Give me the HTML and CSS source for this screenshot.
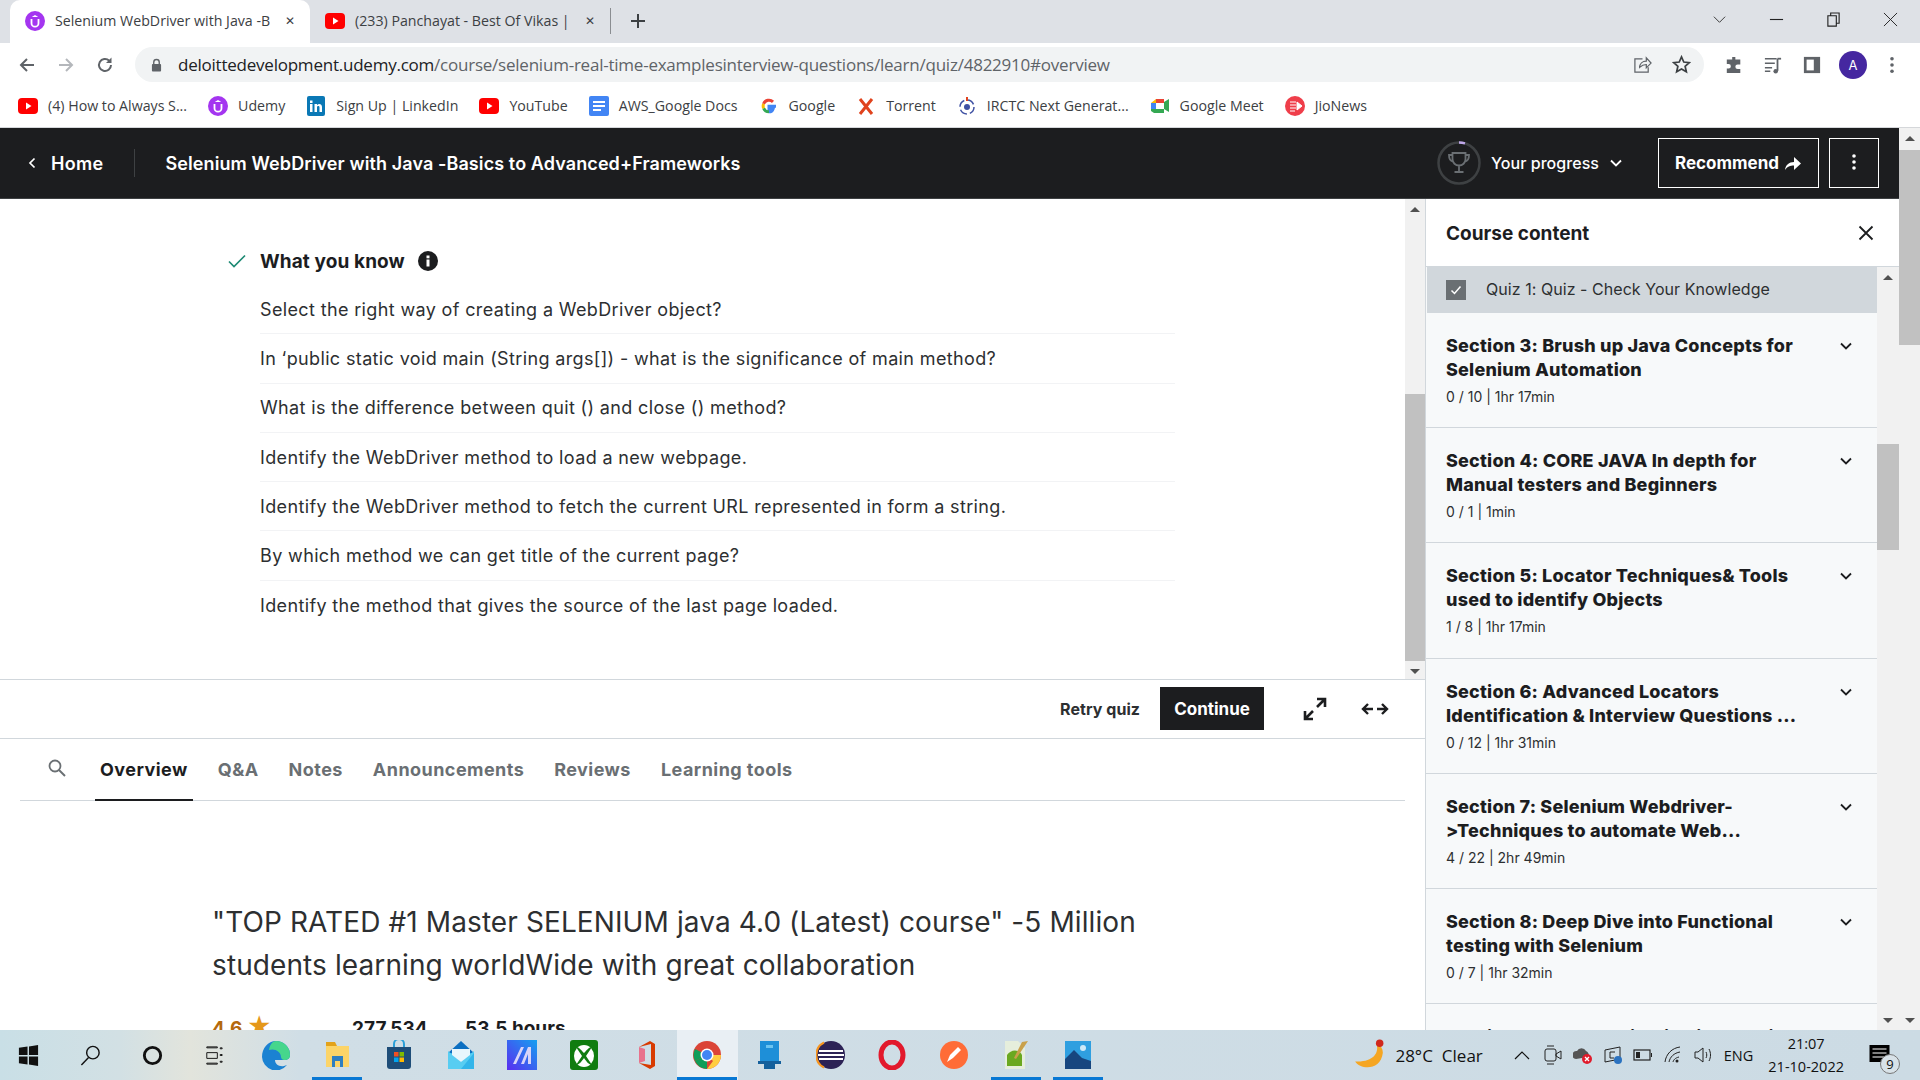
FILE: index.html
```html
<!DOCTYPE html>
<html lang="en">
<head>
    <meta charset="UTF-8">
    <title>Selenium WebDriver with Java - Udemy</title>
    <link rel="stylesheet" href="styles.css">
</head>
<body>
    <div class="tabstrip">
        <div class="tab active">
            <svg class="favicon" viewBox="0 0 20 20"><circle cx="10" cy="10" r="10" fill="#a435f0"/><path d="M6.500 8v4.200a3.500 3.500 0 0 0 7 0V8" fill="none" stroke="#fff" stroke-width="1.800"/><path d="M10 4l3.200 2H6.800z" fill="#fff"/></svg>
            <span class="tab-title">Selenium WebDriver with Java -B</span>
            <span class="tab-close">&#10005;</span>
        </div>
        <div class="tab">
            <svg class="favicon" viewBox="0 0 20 20"><rect y="2" width="20" height="16" rx="4" fill="#f00"/><path d="M8 6.500l5.500 3.500L8 13.500z" fill="#fff"/></svg>
            <span class="tab-title">(233) Panchayat - Best Of Vikas |</span>
            <span class="tab-close">&#10005;</span>
        </div>
        <span class="tab-sep"></span>
        <svg class="new-tab" viewBox="0 0 16 16"><path d="M8 1v14M1 8h14" stroke="#3c4043" stroke-width="2"/></svg>
        <div class="window-controls">
            <svg viewBox="0 0 16 16"><path d="M2 5l6 6 6-6" fill="none" stroke="#333" stroke-width="1"/></svg>
            <svg viewBox="0 0 16 16"><path d="M1 8h14" stroke="#222" stroke-width="1.200"/></svg>
            <svg viewBox="0 0 16 16"><path d="M2 4h9v11H2zM5 4V1h9v11h-3" fill="none" stroke="#222" stroke-width="1.200"/></svg>
            <svg viewBox="0 0 16 16"><path d="M1 1l14 14M15 1L1 15" stroke="#222" stroke-width="1"/></svg>
        </div>
    </div>

    <div class="toolbar">
        <svg class="nav-icon" viewBox="0 0 18 18"><path d="M16 9H3M9 3L3 9l6 6" fill="none" stroke="#5f6368" stroke-width="2"/></svg>
        <svg class="nav-icon" viewBox="0 0 18 18"><path d="M2 9h13M9 3l6 6-6 6" fill="none" stroke="#b4b7bb" stroke-width="2"/></svg>
        <svg class="nav-icon" viewBox="0 0 18 18"><path d="M15 9a6 6 0 1 1-1.800-4.300" fill="none" stroke="#5f6368" stroke-width="2"/><path d="M15.500 1.500v5.500H10z" fill="#5f6368"/></svg>
        <div class="omnibox">
            <svg class="lock" viewBox="0 0 12 14"><path d="M3 6V4a3 3 0 0 1 6 0v2" fill="none" stroke="#5f6368" stroke-width="1.500"/><rect x="1" y="6" width="10" height="8" rx="1" fill="#5f6368"/></svg>
            <span class="url"><b>deloittedevelopment.udemy.com</b>/course/selenium-real-time-examplesinterview-questions/learn/quiz/4822910#overview</span>
            <svg class="omni-icon" viewBox="0 0 20 20"><path d="M10 4H2v14h14v-5" fill="none" stroke="#5f6368" stroke-width="1.300"/><path d="M7 13c0-4 3-6.500 7-6.500V3l5 5.500-5 5V10c-3 0-5 1-7 3z" fill="none" stroke="#5f6368" stroke-width="1.300"/></svg>
            <svg class="omni-icon" viewBox="0 0 20 20"><path d="M10 2l2.400 5.400 5.800.6-4.400 3.900 1.300 5.800L10 14.700l-5.100 3 1.300-5.800L1.800 8l5.800-.6z" fill="none" stroke="#3c4043" stroke-width="1.800"/></svg>
        </div>
        <div class="toolbar-actions">
            <svg viewBox="0 0 20 20"><path d="M8 1h3.500v3H17v5.500h-3a2.500 2.500 0 0 0 0 5h3V19H2v-5h2a2.500 2.500 0 0 0 0-5H2V4h6z" fill="#5f6368"/></svg>
            <svg viewBox="0 0 20 20"><path d="M1 3h13M1 8h11M1 13h8M1 17h6" stroke="#5f6368" stroke-width="1.800"/><path d="M15 3v13.500" stroke="#5f6368" stroke-width="2"/><circle cx="13" cy="17" r="2.500" fill="#5f6368"/><path d="M15 3h4" stroke="#5f6368" stroke-width="2"/></svg>
            <svg viewBox="0 0 20 20"><rect x="1" y="1" width="18" height="18" fill="#5f6368"/><rect x="4" y="4" width="8" height="12" fill="#fff"/></svg>
            <span class="avatar">A</span>
            <svg viewBox="0 0 20 20"><circle cx="10" cy="3" r="2" fill="#5f6368"/><circle cx="10" cy="10" r="2" fill="#5f6368"/><circle cx="10" cy="17" r="2" fill="#5f6368"/></svg>
        </div>
    </div>

    <div class="bookmarks">
        <span class="bookmark"><svg viewBox="0 0 20 20"><rect y="2" width="20" height="16" rx="4" fill="#f00"/><path d="M8 6.500l5.500 3.500L8 13.500z" fill="#fff"/></svg>(4) How to Always S...</span>
        <span class="bookmark"><svg viewBox="0 0 20 20"><circle cx="10" cy="10" r="10" fill="#a435f0"/><path d="M6.500 8v4.200a3.500 3.500 0 0 0 7 0V8" fill="none" stroke="#fff" stroke-width="1.800"/><path d="M10 4l3.200 2H6.800z" fill="#fff"/></svg>Udemy</span>
        <span class="bookmark"><svg viewBox="0 0 20 20"><rect x="1" width="18" height="20" rx="2" fill="#0a78b5"/><path d="M4 8h2.500v8H4zM4 4.500h2.500V7H4zM8.500 8H11v1.200c1.500-2 5-1.500 5 1.800v5h-2.500v-4.500c0-2-2.500-1.800-2.500 0V16H8.500z" fill="#fff"/></svg>Sign Up | LinkedIn</span>
        <span class="bookmark"><svg viewBox="0 0 20 20"><rect y="2" width="20" height="16" rx="4" fill="#f00"/><path d="M8 6.500l5.500 3.500L8 13.500z" fill="#fff"/></svg>YouTube</span>
        <span class="bookmark"><svg viewBox="0 0 20 20"><rect width="20" height="20" rx="2" fill="#4285f4"/><path d="M4 6h12M4 10h12M4 14h8" stroke="#fff" stroke-width="2"/></svg>AWS_Google Docs</span>
        <span class="bookmark"><svg viewBox="0 0 20 20"><path d="M17 10.200H10v3h4c-.5 1.600-2 2.600-4 2.600" fill="none" stroke="#4285f4" stroke-width="3"/><path d="M10 15.800a5.800 5.800 0 0 1-5.400-3.600" fill="none" stroke="#34a853" stroke-width="3"/><path d="M4.600 12.200a5.800 5.800 0 0 1 0-4.400" fill="none" stroke="#fbbc05" stroke-width="3"/><path d="M4.600 7.800A5.800 5.800 0 0 1 14 5.800" fill="none" stroke="#ea4335" stroke-width="3"/></svg>Google</span>
        <span class="bookmark"><svg viewBox="0 0 20 20"><path d="M4 3l12 15M16 3L4 18" stroke="#e0431d" stroke-width="3"/></svg>Torrent</span>
        <span class="bookmark"><svg viewBox="0 0 20 20"><circle cx="10" cy="11" r="7" fill="none" stroke="#3f51a3" stroke-width="1.500" stroke-dasharray="8 3"/><circle cx="10" cy="11" r="3" fill="#3f51a3"/><path d="M10 1v4" stroke="#e0431d" stroke-width="2"/></svg>IRCTC Next Generat...</span>
        <span class="bookmark"><svg viewBox="0 0 20 20"><path d="M1 7l5-4h8v6H1z" fill="#fbbc05"/><path d="M1 7h5v6H1z" fill="#4285f4"/><path d="M6 13h8v4H4l-3-2v-2z" fill="#34a853"/><path d="M6 3h8v5H6z" fill="#ea4335"/><path d="M14 6l5-3v13l-5-3z" fill="#34a853"/><rect x="6" y="7" width="8" height="6" fill="#fff"/></svg>Google Meet</span>
        <span class="bookmark"><svg viewBox="0 0 20 20"><circle cx="10" cy="10" r="10" fill="#ef3e4a"/><path d="M5 6h6M5 9h6M5 12h6M5 15h5M12 6l5 4-5 4z" stroke="#fff" fill="#fff"/></svg>JioNews</span>
    </div>

    <div class="page">
        <div class="page-content">
            <header class="course-header">
                <svg class="back-chevron" viewBox="0 0 10 14"><path d="M7.500 2.500L3 7l4.500 4.500" fill="none" stroke="#fff" stroke-width="1.700"/></svg>
                <span class="home-link">Home</span>
                <span class="header-divider"></span>
                <span class="course-title">Selenium WebDriver with Java -Basics to Advanced+Frameworks</span>
                <svg class="trophy" viewBox="0 0 44 44">
                    <circle cx="22" cy="22" r="20.500" fill="none" stroke="#3e4143" stroke-width="2.500"/>
                    <path d="M22 1.500a20.500 20.500 0 0 1 6 .9" fill="none" stroke="#c0a8ea" stroke-width="2.500"/>
                    <path d="M15.500 12h13v6c0 4-3 6.500-6.500 6.500s-6.500-2.500-6.500-6.500zM15.500 14H12c0 4 1.500 6 4 6.500M28.500 14H32c0 4-1.500 6-4 6.500M22 24.500V30M17.500 31h9" fill="none" stroke="#6a6f73" stroke-width="1.800"/>
                </svg>
                <span class="progress-link">Your progress</span>
                <svg class="progress-chevron" viewBox="0 0 14 14"><path d="M2 4.500l5 5 5-5" fill="none" stroke="#fff" stroke-width="1.800"/></svg>
                <button class="recommend-btn">Recommend
                    <svg viewBox="0 0 18 16"><path d="M1 15c.5-5 4-8 9-8V2l7 6.500-7 6.500v-4.500c-4 0-6.500 1-9 4.500z" fill="#fff"/></svg>
                </button>
                <button class="kebab-btn">
                    <svg viewBox="0 0 6 18"><circle cx="3" cy="3" r="1.800" fill="#fff"/><circle cx="3" cy="9" r="1.800" fill="#fff"/><circle cx="3" cy="15" r="1.800" fill="#fff"/></svg>
                </button>
            </header>

            <div class="workspace">
                <main class="main">
                    <div class="quiz-view">
                        <div class="quiz-body">
                            <div class="quiz-heading">
                                <svg class="check" viewBox="0 0 18 14"><path d="M1 7.500l5 5L17 1.500" fill="none" stroke="#1e8a74" stroke-width="1.700"/></svg>
                                <h3>What you know</h3>
                                <svg class="info" viewBox="0 0 20 20"><circle cx="10" cy="10" r="10" fill="#1c1d1f"/><rect x="8.500" y="8.500" width="3" height="7" fill="#fff"/><rect x="8.500" y="4.500" width="3" height="2.800" fill="#fff"/></svg>
                            </div>
                            <ul class="question-list">
                                <li>Select the right way of creating a WebDriver object?</li>
                                <li>In ‘public static void main (String args[]) - what is the significance of main method?</li>
                                <li>What is the difference between quit () and close () method?</li>
                                <li>Identify the WebDriver method to load a new webpage.</li>
                                <li>Identify the WebDriver method to fetch the current URL represented in form a string.</li>
                                <li>By which method we can get title of the current page?</li>
                                <li>Identify the method that gives the source of the last page loaded.</li>
                            </ul>
                        </div>
                        <div class="scrollbar quiz-scroll">
                            <span class="arrow-up"></span>
                            <div class="track"><span class="thumb"></span></div>
                            <span class="arrow-down"></span>
                        </div>
                    </div>

                    <div class="quiz-footer">
                        <span class="retry">Retry quiz</span>
                        <button class="continue-btn">Continue</button>
                        <svg class="expand" viewBox="0 0 24 24"><path d="M14 2h8v8M21.500 2.500L14 10M10 22H2v-8M2.500 21.500L10 14" fill="none" stroke="#1c1d1f" stroke-width="2.600"/></svg>
                        <svg class="widen" viewBox="0 0 28 14"><path d="M12 7H2M7 2L2 7l5 5M16 7h10M21 2l5 5-5 5" fill="none" stroke="#1c1d1f" stroke-width="2.400"/></svg>
                    </div>

                    <nav class="course-tabs">
                        <svg class="tab-search" viewBox="0 0 20 20"><circle cx="8" cy="8" r="5.500" fill="none" stroke="#6a6f73" stroke-width="1.800"/><path d="M12 12l6 6" stroke="#6a6f73" stroke-width="2"/></svg>
                        <span class="course-tab current">Overview</span>
                        <span class="course-tab">Q&amp;A</span>
                        <span class="course-tab">Notes</span>
                        <span class="course-tab">Announcements</span>
                        <span class="course-tab">Reviews</span>
                        <span class="course-tab">Learning tools</span>
                    </nav>

                    <section class="overview">
                        <h2>"TOP RATED #1 Master SELENIUM java 4.0 (Latest) course" -5 Million students learning worldWide with great collaboration</h2>
                        <div class="stats">
                            <span class="rating">4.6 <i>★</i></span>
                            <span class="stat-students">277,534</span>
                            <span>53.5 hours</span>
                        </div>
                    </section>
                </main>

                <aside class="sidebar">
                    <div class="sidebar-head">
                        <h3>Course content</h3>
                        <svg viewBox="0 0 16 16"><path d="M1.500 1.500l13 13M14.500 1.500l-13 13" stroke="#1c1d1f" stroke-width="1.800"/></svg>
                    </div>
                    <div class="sidebar-list">
                        <div class="sections">
                            <div class="quiz-row">
                                <span class="checkbox"><svg viewBox="0 0 20 20"><path d="M5.500 10.500l3 3 6-7" fill="none" stroke="#fff" stroke-width="1.500"/></svg></span>
                                <span>Quiz 1: Quiz - Check Your Knowledge</span>
                            </div>
                            <div class="section">
                                <div class="section-text">
                                    <h4>Section 3: Brush up Java Concepts for Selenium Automation</h4>
                                    <p>0 / 10 | 1hr 17min</p>
                                </div>
                                <svg viewBox="0 0 14 14"><path d="M2 4.500l5 5 5-5" fill="none" stroke="#1c1d1f" stroke-width="1.800"/></svg>
                            </div>
                            <div class="section">
                                <div class="section-text">
                                    <h4>Section 4: CORE JAVA In depth for Manual testers and Beginners</h4>
                                    <p>0 / 1 | 1min</p>
                                </div>
                                <svg viewBox="0 0 14 14"><path d="M2 4.500l5 5 5-5" fill="none" stroke="#1c1d1f" stroke-width="1.800"/></svg>
                            </div>
                            <div class="section">
                                <div class="section-text">
                                    <h4>Section 5: Locator Techniques&amp; Tools used to identify Objects</h4>
                                    <p>1 / 8 | 1hr 17min</p>
                                </div>
                                <svg viewBox="0 0 14 14"><path d="M2 4.500l5 5 5-5" fill="none" stroke="#1c1d1f" stroke-width="1.800"/></svg>
                            </div>
                            <div class="section">
                                <div class="section-text">
                                    <h4>Section 6: Advanced Locators Identification &amp; Interview Questions ...</h4>
                                    <p>0 / 12 | 1hr 31min</p>
                                </div>
                                <svg viewBox="0 0 14 14"><path d="M2 4.500l5 5 5-5" fill="none" stroke="#1c1d1f" stroke-width="1.800"/></svg>
                            </div>
                            <div class="section">
                                <div class="section-text">
                                    <h4>Section 7: Selenium Webdriver- &gt;Techniques to automate Web...</h4>
                                    <p>4 / 22 | 2hr 49min</p>
                                </div>
                                <svg viewBox="0 0 14 14"><path d="M2 4.500l5 5 5-5" fill="none" stroke="#1c1d1f" stroke-width="1.800"/></svg>
                            </div>
                            <div class="section">
                                <div class="section-text">
                                    <h4>Section 8: Deep Dive into Functional testing with Selenium</h4>
                                    <p>0 / 7 | 1hr 32min</p>
                                </div>
                                <svg viewBox="0 0 14 14"><path d="M2 4.500l5 5 5-5" fill="none" stroke="#1c1d1f" stroke-width="1.800"/></svg>
                            </div>
                            <div class="section">
                                <div class="section-text">
                                    <h4>Section 9: Synchronization in Selenium</h4>
                                </div>
                            </div>
                        </div>
                        <div class="scrollbar list-scroll">
                            <span class="arrow-up"></span>
                            <div class="track"><span class="thumb"></span></div>
                            <span class="arrow-down"></span>
                        </div>
                    </div>
                </aside>
            </div>
        </div>

        <div class="scrollbar page-scroll">
            <span class="arrow-up"></span>
            <div class="track"><span class="thumb"></span></div>
            <span class="arrow-down"></span>
        </div>
    </div>

    <footer class="taskbar">
        <div class="task-items">
            <span class="task-item sys"><svg viewBox="0 0 24 24"><path d="M2 4l9-1.300V11.500H2zM12.500 2.500L22 1v10.500h-9.500zM2 13h9v8.300L2 20zM12.500 13H22v10l-9.500-1.500z" fill="#111"/></svg></span>
            <span class="task-item sys"><svg viewBox="0 0 24 24"><circle cx="14.500" cy="9" r="6.500" fill="none" stroke="#111" stroke-width="1.500"/><path d="M10 14l-7.500 8" stroke="#111" stroke-width="1.500"/></svg></span>
            <span class="task-item sys"><svg viewBox="0 0 24 24"><circle cx="12" cy="12" r="8.500" fill="none" stroke="#111" stroke-width="3"/></svg></span>
            <span class="task-item sys"><svg viewBox="0 0 24 24"><path d="M5 3h11v1H5zM5 9h11v6H5zM5 20h11v1H5zM19 4h2v1h-2zM19 11h2v1h-2zM19 18h2v1h-2z" fill="none" stroke="#111"/></svg></span>
            <span class="task-item"><svg viewBox="0 0 30 30"><path d="M15 1a14 14 0 0 1 14 14c0 3-2 5-6 5H14c0 4 4 7 9 6l3-1a14 14 0 0 1-25-8C1 8 7 1 15 1z" fill="#1b82d2"/><path d="M15 1a14 14 0 0 1 14 14c0 3-2 5-6 5-1 0-3-1-3-3 0-5-6-9-12-7C9 4 12 1 15 1z" fill="#46d68c"/></svg></span>
            <span class="task-item running"><svg viewBox="0 0 30 30"><path d="M4 2h9l2 4H4z" fill="#e3a21a"/><rect x="4" y="6" width="23" height="21" fill="#fcd468"/><path d="M10 27V16h11v11h-3v-6h-5v6z" fill="#2f7fc1"/></svg></span>
            <span class="task-item"><svg viewBox="0 0 30 30"><path d="M10 7V4a5 5 0 0 1 10 0v3" fill="none" stroke="#2a9fd8" stroke-width="2"/><path d="M3 7h24v19a3 3 0 0 1-3 3H6a3 3 0 0 1-3-3z" fill="#1e4d78"/><path d="M10 12h4.500v4.500H10z" fill="#f25022"/><path d="M15.500 12H20v4.500h-4.500z" fill="#7fba00"/><path d="M10 17.500h4.500V22H10z" fill="#00a4ef"/><path d="M15.500 17.500H20V22h-4.500z" fill="#ffb900"/></svg></span>
            <span class="task-item"><svg viewBox="0 0 30 30"><path d="M15 1l13 12H2z" fill="#0c6fc1"/><rect x="2" y="13" width="26" height="16" fill="#33b5ea"/><path d="M2 11l13 11 13-11v2L15 29H2z" fill="#58cdf2"/><path d="M6 9h18v6l-9 7-9-7z" fill="#e8f6fc"/></svg></span>
            <span class="task-item"><svg viewBox="0 0 30 30"><defs><linearGradient id="appGrad" x1="0" y1="1" x2="1" y2="0"><stop offset="0" stop-color="#5a2df0"/><stop offset="1" stop-color="#14a0f0"/></linearGradient></defs><rect width="30" height="30" fill="url(#appGrad)"/><path d="M6 24L14 7h3L9 24zM14 24l7-17h3v17h-3V14l-4 10z" fill="#d8d4f8"/></svg></span>
            <span class="task-item"><svg viewBox="0 0 30 30"><rect x="1" width="28" height="30" rx="3" fill="#107c10"/><ellipse cx="15" cy="16" rx="10" ry="11" fill="#fff"/><path d="M15 13c-3-3-5-6-8-6l6 9-6 9c3 0 6-4 8-7 2 3 5 7 8 7l-6-9 6-9c-3 0-5 3-8 6z" fill="#107c10"/></svg></span>
            <span class="task-item"><svg viewBox="0 0 30 30"><path d="M8 7l11-6 5 3v22l-5 3-11-6 12 2V4z" fill="#d83b01"/><path d="M8 7v16l6-2V9z" fill="#e8728c"/></svg></span>
            <span class="task-item running current"><svg viewBox="0 0 30 30"><circle cx="15" cy="15" r="14" fill="#db4437"/><path d="M15 15L3 21a14 14 0 0 0 12 8z" fill="#0f9d58"/><path d="M15 15l-12 6a14 14 0 0 1 0-12z" fill="#0f9d58"/><path d="M15 15h14a14 14 0 0 1-14 14l6-8z" fill="#ffcd40"/><circle cx="15" cy="15" r="6.500" fill="#fff"/><circle cx="15" cy="15" r="5" fill="#4285f4"/></svg></span>
            <span class="task-item"><svg viewBox="0 0 30 30"><rect x="6" y="1" width="19" height="22" fill="#1e8fd8"/><path d="M4 21h23v3H4z" fill="#14609c"/><rect x="10" y="24" width="11" height="5" fill="#14609c"/><path d="M12 5h7v3h-7z" fill="#6cc4f0"/></svg></span>
            <span class="task-item"><svg viewBox="0 0 30 30"><circle cx="15" cy="15" r="14" fill="#2c2255"/><path d="M3 11h24M2 15h26M3 19h24" stroke="#fff" stroke-width="2"/><path d="M8 2.500A14 14 0 0 0 8 27.500" fill="none" stroke="#f7941e" stroke-width="2"/></svg></span>
            <span class="task-item"><svg viewBox="0 0 30 30"><ellipse cx="15" cy="15" rx="11" ry="13" fill="none" stroke="#e2192c" stroke-width="5"/></svg></span>
            <span class="task-item"><svg viewBox="0 0 30 30"><circle cx="15" cy="15" r="14" fill="#ff6c37"/><path d="M8 22l3-7 8-8 3 3-8 8z" fill="#fff"/></svg></span>
            <span class="task-item running"><svg viewBox="0 0 30 30"><path d="M4 1h13l7 7v21H4z" fill="#e6eedc"/><path d="M6 15c4-6 12-6 15 0v11H6z" fill="#6aa820"/><path d="M21 2l6-1-12 18-2-1z" fill="#c9a04a"/></svg></span>
            <span class="task-item running"><svg viewBox="0 0 30 30"><rect x="2" y="1" width="26" height="28" fill="#2f9fe0"/><path d="M2 29V19l9-9 8 8 9 3v8z" fill="#17467f"/><circle cx="20" cy="8" r="3" fill="#cde9f8"/></svg></span>
        </div>
        <div class="tray">
            <svg class="moon" viewBox="0 0 30 30"><path d="M22 4c3 10-4 18-20 17 5 8 24 9 26-8 0-4-2-7-6-9z" fill="#f5a623"/><circle cx="25" cy="4" r="3.500" fill="#d0281c"/></svg>
            <span class="weather">28°C</span>
            <span class="weather">Clear</span>
            <svg class="tray-chevron" viewBox="0 0 16 16"><path d="M1 12l7-7 7 7" fill="none" stroke="#111" stroke-width="1.200"/></svg>
            <svg class="tray-icon" viewBox="0 0 20 20"><rect x="2" y="4" width="11" height="12" rx="2" fill="none" stroke="#222"/><path d="M13 9l5-3v8l-5-3z" fill="none" stroke="#222"/><path d="M4 1h7M4 19h7" stroke="#222"/></svg>
            <svg class="tray-icon" viewBox="0 0 20 20"><path d="M3 14a4 4 0 0 1 1-8 5 5 0 0 1 9 0 4 4 0 0 1 2 6z" fill="#555"/><circle cx="14" cy="14" r="5" fill="#e01b2b"/><path d="M12 12l4 4M16 12l-4 4" stroke="#fff" stroke-width="1.300"/></svg>
            <svg class="tray-icon" viewBox="0 0 20 20"><path d="M2 5l15-3v12l-15 3z" fill="none" stroke="#222"/><path d="M12 7H7v6h4" fill="none" stroke="#222"/><circle cx="15" cy="15" r="4" fill="#2a72c0"/></svg>
            <svg class="tray-icon" viewBox="0 0 20 20"><rect x="1" y="5" width="16" height="10" fill="none" stroke="#222" stroke-width="1.200"/><rect x="3" y="7" width="4" height="6" fill="#222"/><path d="M18.500 8v4" stroke="#222"/></svg>
            <svg class="tray-icon" viewBox="0 0 20 20"><path d="M2 17C3 9 9 3 17 2M6 17c1-5 5-9 11-10M10 17c.5-2 2-4 6-5" fill="none" stroke="#222"/><circle cx="14" cy="16" r="1.500" fill="#222"/></svg>
            <svg class="tray-icon" viewBox="0 0 20 20"><path d="M2 7h3l5-4v14l-5-4H2z" fill="none" stroke="#222"/><path d="M13 7c1 2 1 4 0 6M16 4c2 4 2 8 0 12" fill="none" stroke="#222"/></svg>
            <span class="lang">ENG</span>
            <span class="clock"><span>21:07</span><span>21-10-2022</span></span>
            <span class="notify">
                <svg viewBox="0 0 20 20"><rect width="20" height="17" fill="#000"/><path d="M3 4h14M3 8h14M3 12h14" stroke="#fff"/></svg>
                <span class="notify-count">9</span>
            </span>
        </div>
    </footer>
</body>
</html>
```

FILE: styles.css
```css
* {
    box-sizing: border-box;
}

body {
    margin: 0;
    width: 1920px;
    height: 1080px;
    overflow: hidden;
    display: flex;
    flex-direction: column;
    font-family: "Inter", "Liberation Sans", sans-serif;
    color: #1c1d1f;
    background-color: white;
}

button {
    font-family: inherit;
    cursor: pointer;
}

/* browser chrome */
.tabstrip {
    height: 43px;
    flex: none;
    display: flex;
    align-items: center;
    padding-left: 10px;
    background-color: #dee1e6;
    font-family: "Open Sans", sans-serif;
    font-size: 14.200px;
    color: #3c4043;
}

.tab {
    width: 300px;
    height: 43px;
    display: flex;
    align-items: center;
    padding: 0 15px 2px;
    gap: 10px;
    border-radius: 10px 10px 0 0;
}

.tab.active {
    background-color: white;
}

.favicon {
    width: 20px;
    height: 20px;
    flex: none;
}

.tab-title {
    flex: 1;
    overflow: hidden;
    white-space: nowrap;
}

.tab-close {
    font-size: 12px;
    color: #3c4043;
}

.tab-sep {
    width: 1px;
    height: 26px;
    margin-bottom: 2px;
    background-color: #8a8d91;
}

.new-tab {
    width: 16px;
    height: 16px;
    margin: 0 0 2px 19px;
}

.window-controls {
    margin: 0 0 5px auto;
    display: flex;
    gap: 42px;
    padding-right: 22px;
}

.window-controls svg {
    width: 15px;
    height: 15px;
}

.toolbar {
    height: 43px;
    flex: none;
    display: flex;
    align-items: center;
    padding-left: 18px;
    gap: 21px;
    background-color: white;
}

.nav-icon {
    width: 18px;
    height: 18px;
}

.omnibox {
    width: 1569px;
    height: 35px;
    display: flex;
    align-items: center;
    padding: 0 13px 0 16px;
    gap: 16px;
    border-radius: 18px;
    background-color: #f1f3f4;
    font-family: "Open Sans", sans-serif;
    font-size: 17px;
    color: #5f6368;
}

.lock {
    width: 11px;
    height: 14px;
    flex: none;
}

.url {
    flex: 1;
    white-space: nowrap;
    letter-spacing: -0.23px;
}

.url b {
    font-weight: 400;
    color: #202124;
}

.omni-icon {
    width: 19px;
    height: 19px;
    margin-left: 4px;
}

.toolbar-actions {
    display: flex;
    align-items: center;
    gap: 21px;
}

.toolbar-actions svg {
    width: 18px;
    height: 18px;
}

.avatar {
    width: 28px;
    height: 28px;
    margin: 0 -5px 0 -3px;
    border-radius: 50%;
    display: flex;
    align-items: center;
    justify-content: center;
    background-color: #4527a0;
    color: white;
    font-size: 13px;
}

.bookmarks {
    height: 42px;
    flex: none;
    display: flex;
    align-items: center;
    padding: 0 0 2px 18px;
    gap: 21px;
    background-color: white;
    border-bottom: 1px solid #d5d7da;
    font-family: "Open Sans", sans-serif;
    font-size: 14.200px;
    color: #3c4043;
}

.bookmark {
    display: flex;
    align-items: center;
    gap: 10px;
    white-space: nowrap;
}

.bookmark svg {
    width: 20px;
    height: 20px;
}

.page {
    flex: 1;
    min-height: 0;
    display: flex;
}

.page-content {
    width: 1899px;
    flex: none;
    display: flex;
    flex-direction: column;
}

/* udemy course header */
.course-header {
    height: 71px;
    flex: none;
    display: flex;
    align-items: center;
    padding-right: 20px;
    background-color: #1c1d1f;
    border-bottom: 1px solid #3e4143;
    color: white;
    font-weight: 700;
    font-size: 18px;
}

.back-chevron {
    width: 10px;
    height: 14px;
    margin-left: 27px;
}

.home-link {
    margin-left: 14px;
    font-weight: 600;
    letter-spacing: 0.3px;
}

.header-divider {
    width: 1px;
    height: 28px;
    margin: 0 30px 0 31px;
    background-color: #3e4143;
}

.course-title {
    font-weight: 600;
    letter-spacing: 0.1px;
}

.trophy {
    width: 44px;
    height: 44px;
    margin-left: auto;
}

.progress-link {
    margin-left: 10px;
    font-size: 16px;
    font-weight: 500;
    letter-spacing: 0.05px;
}

.progress-chevron {
    width: 14px;
    height: 14px;
    margin-left: 10px;
}

.recommend-btn {
    width: 161px;
    height: 50px;
    margin-left: 35px;
    display: flex;
    align-items: center;
    justify-content: center;
    gap: 5px;
    background-color: #1c1d1f;
    border: 1px solid white;
    color: white;
    font-size: 17px;
    font-weight: 700;
}

.recommend-btn svg {
    width: 18px;
    height: 16px;
}

.kebab-btn {
    width: 50px;
    height: 50px;
    margin-left: 10px;
    background-color: #1c1d1f;
    border: 1px solid white;
}

.kebab-btn svg {
    width: 6px;
    height: 18px;
}

.workspace {
    flex: 1;
    min-height: 0;
    display: flex;
}

.main {
    width: 1425px;
    flex: none;
    overflow: hidden;
}

/* quiz result */
.quiz-view {
    height: 481px;
    display: flex;
    border-bottom: 1px solid #d1d7dc;
}

.quiz-body {
    flex: 1;
    padding: 48px 230px 0 228px;
}

.quiz-heading {
    height: 28px;
    display: flex;
    align-items: center;
}

.check {
    width: 18px;
    height: 14px;
}

.quiz-heading h3 {
    margin: 0 13px 0 14px;
    font-size: 19px;
    font-weight: 700;
    letter-spacing: 0.1px;
}

.info {
    width: 20px;
    height: 20px;
}

.question-list {
    list-style: none;
    margin: 10px 0 0 32px;
    padding: 0;
    font-size: 18px;
    letter-spacing: 0.36px;
    color: #2d2f31;
}

.question-list li {
    height: 49.300px;
    display: flex;
    align-items: center;
    border-bottom: 1px solid #f2f3f5;
}

.question-list li:last-child {
    border-bottom: none;
}

.scrollbar {
    width: 20px;
    flex: none;
    display: flex;
    flex-direction: column;
    align-items: center;
    background-color: #f1f1f1;
}

.arrow-up,
.arrow-down {
    width: 100%;
    height: 20px;
    flex: none;
    display: flex;
    align-items: center;
    justify-content: center;
}

.arrow-up::before {
    content: "";
    border: 5px solid transparent;
    border-top: none;
    border-bottom: 5px solid #505050;
}

.arrow-down::before {
    content: "";
    border: 5px solid transparent;
    border-bottom: none;
    border-top: 5px solid #505050;
}

.track {
    flex: 1;
    width: 100%;
}

.thumb {
    display: block;
    width: 100%;
    background-color: #c1c1c1;
}

.quiz-scroll .track {
    padding-top: 175px;
}

.quiz-scroll .thumb {
    height: 267px;
}

.quiz-footer {
    height: 59px;
    display: flex;
    align-items: center;
    justify-content: flex-end;
    padding: 0 36px 1px 0;
    border-bottom: 1px solid #d1d7dc;
}

.retry {
    font-size: 16px;
    font-weight: 700;
    letter-spacing: 0.05px;
    color: #2d2f31;
}

.continue-btn {
    width: 104px;
    height: 43px;
    margin-left: 20px;
    background-color: #1c1d1f;
    border: none;
    color: white;
    font-size: 17px;
    font-weight: 700;
}

.expand {
    width: 24px;
    height: 24px;
    margin-left: 39px;
}

.widen {
    width: 28px;
    height: 14px;
    margin-left: 34px;
}

/* tabs under the quiz */
.course-tabs {
    height: 62px;
    margin: 0 20px 0 20px;
    display: flex;
    align-items: stretch;
    border-bottom: 1px solid #d1d7dc;
    font-size: 18px;
    font-weight: 700;
    letter-spacing: 0.45px;
    color: #6a6f73;
}

.tab-search {
    width: 20px;
    height: 20px;
    margin: 19px 28px 0 27px;
}

.course-tab {
    display: flex;
    align-items: center;
    padding: 0 5px;
    margin-right: 20px;
    margin-bottom: -1px;
    border-bottom: 2px solid transparent;
}

.course-tab.current {
    color: #1c1d1f;
    border-bottom-color: #1c1d1f;
}

.overview {
    padding: 100px 250px 0 212px;
}

.overview h2 {
    margin: 0;
    font-size: 28px;
    font-weight: 400;
    line-height: 43px;
    letter-spacing: 0.1px;
    color: #2d2f31;
}

.stats {
    display: flex;
    margin-top: 30px;
    font-size: 19px;
    font-weight: 700;
}

.rating {
    width: 140px;
    color: #b4690e;
}

.rating i {
    font-style: normal;
    font-size: 24px;
    line-height: 20px;
    color: #e59819;
}

.stat-students {
    width: 113px;
}

/* course content panel */
.sidebar {
    width: 474px;
    flex: none;
    display: flex;
    flex-direction: column;
    border-left: 1px solid #d1d7dc;
}

.sidebar-head {
    height: 68px;
    flex: none;
    display: flex;
    align-items: center;
    justify-content: space-between;
    padding: 1px 25px 0 20px;
    background-color: white;
    border-bottom: 1px solid #d1d7dc;
}

.sidebar-head h3 {
    margin: 0;
    font-size: 19px;
    font-weight: 700;
}

.sidebar-head svg {
    width: 16px;
    height: 16px;
}

.sidebar-list {
    flex: 1;
    min-height: 0;
    display: flex;
}

.sections {
    flex: 1;
    overflow: hidden;
    background-color: #f7f9fa;
}

.quiz-row {
    height: 46px;
    display: flex;
    align-items: center;
    gap: 20px;
    padding: 0 0 2px 20px;
    margin-left: 1px;
    background-color: #d1d7dc;
    font-size: 16px;
    letter-spacing: 0.05px;
    color: #2d2f31;
}

.checkbox {
    width: 20px;
    height: 20px;
    margin: 2px 0 0 -1px;
    background-color: #6a6f73;
}

.checkbox svg {
    display: block;
    width: 20px;
    height: 20px;
}

.section {
    height: 115.200px;
    display: flex;
    justify-content: space-between;
    padding: 21px 24px 0 20px;
    border-bottom: 1px solid #d1d7dc;
}

.section-text {
    width: 376px;
}

.section h4 {
    margin: 0;
    font-size: 18px;
    font-weight: 800;
    line-height: 24px;
    letter-spacing: 0.2px;
}

.section p {
    margin: 5px 0 0;
    font-size: 14px;
    line-height: 20px;
    color: #2d2f31;
}

.section > svg {
    width: 14px;
    height: 14px;
    margin-top: 5px;
}

.list-scroll {
    width: 22px;
}

.list-scroll .track {
    padding-top: 157px;
}

.list-scroll .thumb {
    height: 106px;
}

.page-scroll {
    width: 21px;
}

.page-scroll .track {
    padding-top: 2px;
}

.page-scroll .thumb {
    height: 195px;
}

/* windows taskbar */
.taskbar {
    height: 50px;
    flex: none;
    display: flex;
    justify-content: space-between;
    background: linear-gradient(90deg, #c9dfe6 0, #d2e0e4 120px, #e2e4dc 190px, #d0dee6 300px, #ccdbe4 100%);
    font-family: "Open Sans", sans-serif;
    color: #111;
}

.task-items {
    display: flex;
    margin-left: -2px;
}

.task-item {
    width: 61.700px;
    height: 50px;
    display: flex;
    align-items: center;
    justify-content: center;
}

.task-item svg {
    width: 30px;
    height: 30px;
}

.task-item.sys svg {
    width: 23px;
    height: 23px;
}

.task-item.running {
    background: linear-gradient(#0878d4, #0878d4) center bottom / 50px 3px no-repeat;
}

.task-item.current {
    background: linear-gradient(#0878d4, #0878d4) center bottom / 60px 3px no-repeat, #e9eff4;
}

.tray {
    display: flex;
    align-items: center;
    padding-right: 30px;
    font-size: 17px;
}

.moon {
    width: 32px;
    height: 32px;
    margin-right: 10px;
}

.weather {
    margin-right: 9px;
}

.tray-chevron {
    width: 16px;
    height: 16px;
    margin: 0 12.500px 0 22.500px;
}

.tray-icon {
    width: 20px;
    height: 20px;
    margin-right: 10px;
}

.lang {
    margin-left: 1px;
    font-size: 14.500px;
}

.clock {
    display: flex;
    flex-direction: column;
    align-items: center;
    margin: 0 25px 0 15px;
    font-size: 14.500px;
    line-height: 23px;
}

.notify {
    position: relative;
    width: 21px;
    height: 20px;
}

.notify svg {
    display: block;
    width: 21px;
    height: 20px;
}

.notify-count {
    position: absolute;
    right: -10px;
    top: 9px;
    width: 20px;
    height: 20px;
    display: flex;
    align-items: center;
    justify-content: center;
    border-radius: 50%;
    border: 1px solid #777;
    background-color: #d8e2e8;
    font-size: 13px;
}
```
